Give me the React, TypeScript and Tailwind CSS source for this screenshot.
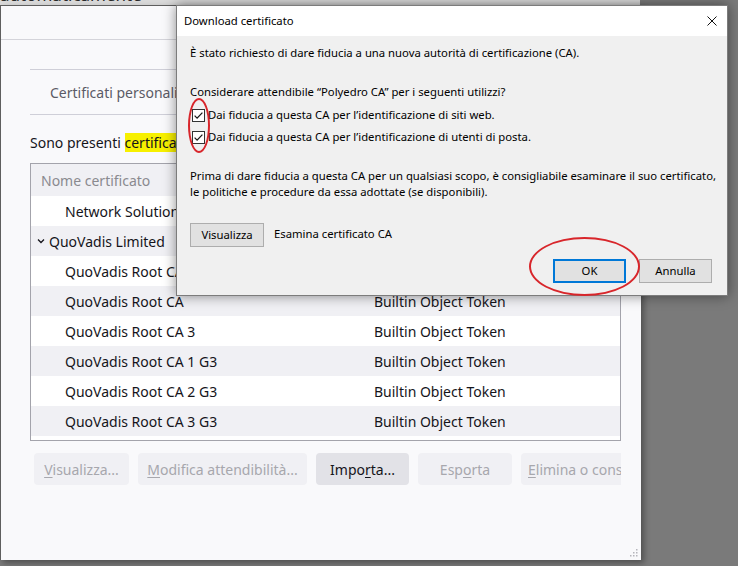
import React from "react";

type Row = { name: string; token?: string; group?: boolean };

const rows: Row[] = [
  { name: "Network Solutions Certificate Authority", token: "Builtin Object Token" },
  { name: "QuoVadis Limited", group: true },
  { name: "QuoVadis Root CA 2", token: "Builtin Object Token" },
  { name: "QuoVadis Root CA", token: "Builtin Object Token" },
  { name: "QuoVadis Root CA 3", token: "Builtin Object Token" },
  { name: "QuoVadis Root CA 1 G3", token: "Builtin Object Token" },
  { name: "QuoVadis Root CA 2 G3", token: "Builtin Object Token" },
  { name: "QuoVadis Root CA 3 G3", token: "Builtin Object Token" },
  { name: "QuoVadis Root Certification Authority", token: "Builtin Object Token" },
];

function CheckBox() {
  return (
    <svg width="13" height="13" viewBox="0 0 13 13" className="shrink-0">
      <rect x="0.5" y="0.5" width="12" height="12" fill="#ffffff" stroke="#333333" />
      <path d="M2.6 6.6 L5.1 9.1 L10.4 3.6" fill="none" stroke="#1a1a1a" strokeWidth="1.3" />
    </svg>
  );
}

function Btn({ label, w, active }: { label: [string, string, string]; w: string; active?: boolean }) {
  return (
    <div
      className={
        "h-[32px] shrink-0 rounded-[4px] flex items-center text-[14px] whitespace-nowrap " +
        w +
        (active ? " bg-[#e2e2e7] text-[#15141a]" : " bg-[#f0f0f4] text-[#a7a7ad]")
      }
    >
      <span>
        {label[0]}
        <span className="underline underline-offset-2">{label[1]}</span>
        {label[2]}
      </span>
    </div>
  );
}

export default function App() {
  return (
    <div className="w-[738px] h-[566px] bg-[#7a7a7a] relative overflow-hidden font-['Noto_Sans',sans-serif]">
      {/* background window strip */}
      <div className="h-[5px] w-[640px] bg-[#d9d9d9] overflow-hidden">
        <div className="-mt-[14px] text-[17px] leading-[18px] text-[#2a2a2a] whitespace-nowrap">automaticamente</div>
      </div>

      {/* main certificate manager dialog */}
      <div className="w-[641px] h-[555px] bg-[#f9f9fb] border-l border-t border-[#5e5e5e] shadow-[3px_3px_6px_rgba(0,0,0,0.35)] relative flex flex-col">
        <div className="h-[34px] border-b border-[#d4d4da] shrink-0" />
        <div className="ml-[29px] w-[591px] overflow-hidden flex flex-col">
          <div className="mt-[29px] h-[46px] border-y border-[#cfcfd8] flex items-center pl-[20px] text-[14px] text-[#5b5b66] whitespace-nowrap shrink-0">
            <span>Certificati personali</span>
          </div>
          <div className="mt-[17px] h-[22px] leading-[22px] text-[14px] text-[#15141a] whitespace-nowrap shrink-0">
            Sono presenti <span className="bg-[#f7f000]">certificati</span> archiviati che identificano queste autorità di certificazione
          </div>
          <div className="mt-[9px] h-[278px] border border-[#a3a3ab] flex flex-col shrink-0 overflow-hidden">
            <div className="h-[32px] bg-[#f0f0f4] flex items-center text-[14px] text-[#8a8a8f] shrink-0">
              <div className="w-[332px] pl-[10px]">Nome certificato</div>
            </div>
            <div className="flex flex-col">
              {rows.map((r, i) => (
                <div
                  key={i}
                  className={
                    "h-[30px] shrink-0 flex items-center text-[14px] text-[#15141a] whitespace-nowrap " +
                    (i % 2 === 0 ? "bg-white" : "bg-[#f0f0f4]")
                  }
                >
                  {r.group ? (
                    <div className="w-[332px] flex items-center pl-[5px] gap-[3px]">
                      <svg width="10" height="10" viewBox="0 0 10 10">
                        <path d="M2 3.5 L5 6.5 L8 3.5" fill="none" stroke="#15141a" strokeWidth="1.3" />
                      </svg>
                      <span>{r.name}</span>
                    </div>
                  ) : (
                    <>
                      <div className="w-[332px] pl-[34px] overflow-hidden">{r.name}</div>
                      <div className="pl-[11px]">{r.token}</div>
                    </>
                  )}
                </div>
              ))}
            </div>
          </div>
          <div className="mt-[12px] pl-[4px] flex gap-[9px] shrink-0">
            <Btn label={["", "V", "isualizza..."]} w="w-[95px] justify-center" />
            <Btn label={["", "M", "odifica attendibilità..."]} w="w-[169px] justify-center" />
            <Btn label={["Impo", "r", "ta..."]} w="w-[93px] justify-center" active />
            <Btn label={["Esp", "o", "rta"]} w="w-[94px] justify-center" />
            <Btn label={["", "E", "limina o considera non attendibile..."]} w="px-[7px]" />
          </div>
        </div>
        {/* resize grip */}
        <svg width="8" height="8" viewBox="0 0 8 8" className="absolute right-[3px] bottom-[3px]">
          <rect x="6" y="0" width="1.5" height="1.5" fill="#b5b5bb" />
          <rect x="3" y="3" width="1.5" height="1.5" fill="#b5b5bb" />
          <rect x="6" y="3" width="1.5" height="1.5" fill="#b5b5bb" />
          <rect x="0" y="6" width="1.5" height="1.5" fill="#b5b5bb" />
          <rect x="3" y="6" width="1.5" height="1.5" fill="#b5b5bb" />
          <rect x="6" y="6" width="1.5" height="1.5" fill="#b5b5bb" />
        </svg>
      </div>

      {/* Download certificato dialog */}
      <div className="absolute left-[176px] top-[5px] w-[552px] h-[291px] bg-[#f0f0f0] border border-[#7c7c7c] shadow-[0_0_12px_rgba(0,0,0,0.45)] flex flex-col text-[11.3px] text-black">
        <div className="h-[30px] bg-white flex items-center justify-between pl-[7px] pr-[10px] shrink-0">
          <span>Download certificato</span>
          <svg width="10" height="10" viewBox="0 0 10 10">
            <path d="M0.5 0.5 L9.5 9.5 M9.5 0.5 L0.5 9.5" stroke="#111" strokeWidth="1" />
          </svg>
        </div>
        <div className="flex flex-col pl-[13px] pr-[15px] pt-[9px] leading-[16px]">
          <div className="h-[16px] whitespace-nowrap">È stato richiesto di dare fiducia a una nuova autorità di certificazione (CA).</div>
          <div className="mt-[23px] h-[16px] whitespace-nowrap">Considerare attendibile “Polyedro CA” per i seguenti utilizzi?</div>
          <div className="mt-[4px] h-[22px] flex items-center gap-[3px] pl-[2px] whitespace-nowrap">
            <CheckBox />
            <span>Dai fiducia a questa CA per l’identificazione di siti web.</span>
          </div>
          <div className="h-[22px] flex items-center gap-[3px] pl-[2px] whitespace-nowrap">
            <CheckBox />
            <span>Dai fiducia a questa CA per l’identificazione di utenti di posta.</span>
          </div>
          <div className="mt-[20px] whitespace-nowrap">
            <div className="h-[16px]">Prima di dare fiducia a questa CA per un qualsiasi scopo, è consigliabile esaminare il suo certificato,</div>
            <div className="h-[16px]">le politiche e procedure da essa adottate (se disponibili).</div>
          </div>
          <div className="mt-[23px] h-[24px] flex items-center">
            <div className="w-[74px] h-[24px] bg-[#e1e1e1] border border-[#adadad] flex items-center justify-center">Visualizza</div>
            <span className="ml-[10px] -mt-[2px]">Esamina certificato CA</span>
          </div>
          <div className="mt-[12px] h-[24px] flex justify-end gap-[13px]">
            <div className="w-[73px] h-[24px] bg-[#e1e1e1] border-2 border-[#0078d7] flex items-center justify-center">OK</div>
            <div className="w-[73px] h-[24px] bg-[#e1e1e1] border border-[#adadad] flex items-center justify-center">Annulla</div>
          </div>
        </div>
      </div>

      {/* red annotation ellipses */}
      <div className="absolute left-[188px] top-[98px] w-[22px] h-[55px] rounded-[50%] border-2 border-[#d8262b]" />
      <div className="absolute left-[529px] top-[237px] w-[111px] h-[59px] rounded-[50%] border-2 border-[#d8262b]" />
    </div>
  );
}
